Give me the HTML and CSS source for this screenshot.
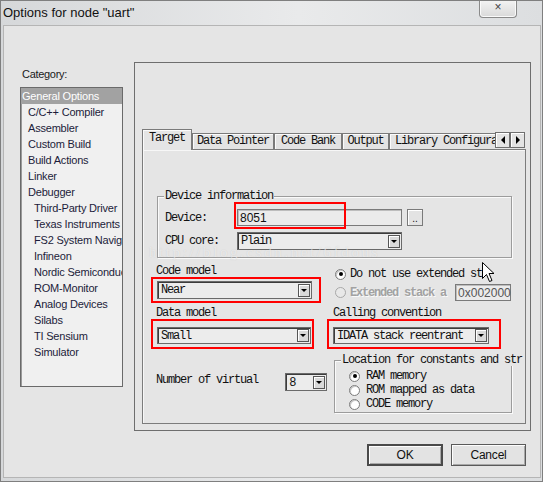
FILE: index.html
```html
<!DOCTYPE html>
<html>
<head>
<meta charset="utf-8">
<link rel="stylesheet" href="styles.css">
</head>
<body>
<div class="window">
  <div class="titlebar">
    <span class="title">Options for node "uart"</span>
    <div class="close">×</div>
  </div>
  <div class="client">
    <div class="main">
      <div class="left">
        <div class="cat-label">Category:</div>
        <div class="list">
          <div class="item sel">General Options</div>
          <div class="item l1">C/C++ Compiler</div>
          <div class="item l1">Assembler</div>
          <div class="item l1">Custom Build</div>
          <div class="item l1">Build Actions</div>
          <div class="item l1">Linker</div>
          <div class="item l1">Debugger</div>
          <div class="item l2">Third-Party Driver</div>
          <div class="item l2">Texas Instruments</div>
          <div class="item l2">FS2 System Navigator</div>
          <div class="item l2">Infineon</div>
          <div class="item l2">Nordic Semiconductor</div>
          <div class="item l2">ROM-Monitor</div>
          <div class="item l2">Analog Devices</div>
          <div class="item l2">Silabs</div>
          <div class="item l2">TI Sensium</div>
          <div class="item l2">Simulator</div>
        </div>
      </div>
      <div class="frame">
        <div class="tabstrip mono">
          <div class="tabs">
            <div class="tab active w-target">Target</div>
            <div class="tab w-dp">Data Pointer</div>
            <div class="tab w-cb">Code Bank</div>
            <div class="tab w-out">Output</div>
            <div class="tab w-lib">Library Configuration</div>
          </div>
          <div class="arrows">
            <div class="arrow"><i class="tri-left"></i></div>
            <div class="arrow"><i class="tri-right"></i></div>
          </div>
        </div>
        <div class="panel mono">
          <div class="group dev">
            <div class="legend">Device information</div>
            <div class="row r-dev">
              <span class="lbl-dev">Device:</span>
              <div class="input dev-in">8051</div>
              <div class="dots">..</div>
            </div>
            <div class="row r-cpu">
              <span class="lbl-dev">CPU core:</span>
              <div class="select cpu"><span class="val">Plain</span><i class="drop"></i></div>
            </div>
          </div>
          <div class="lower">
            <div class="cell a-left">
              <div class="lbl">Code model</div>
              <div class="redbox rb-code">
                <div class="select s-code"><span class="val">Near</span><i class="drop"></i></div>
              </div>
            </div>
            <div class="cell a-right">
              <div class="radio-row r1"><i class="radio on"></i><span>Do not use extended st</span></div>
              <div class="radio-row r2"><i class="radio off"></i><span class="disabled">Extended stack a</span><div class="input stack-in">0x002000</div></div>
            </div>
            <div class="cell b-left">
              <div class="lbl">Data model</div>
              <div class="redbox rb-data">
                <div class="select s-data"><span class="val">Small</span><i class="drop"></i></div>
              </div>
            </div>
            <div class="cell b-right">
              <div class="lbl lbl-call">Calling convention</div>
              <div class="redbox rb-call">
                <div class="select s-call"><span class="val">IDATA stack reentrant</span><i class="drop"></i></div>
              </div>
            </div>
            <div class="cell c-left">
              <span class="lbl-virt">Number of virtual</span>
              <div class="select s-virt"><span class="val sans">8</span><i class="drop"></i></div>
            </div>
            <div class="cell c-right">
              <div class="group loc">
                <div class="legend">Location for constants and str</div>
                <div class="loc-row first"><i class="radio on"></i><span>RAM memory</span></div>
                <div class="loc-row"><i class="radio"></i><span>ROM mapped as data</span></div>
                <div class="loc-row"><i class="radio"></i><span>CODE memory</span></div>
              </div>
            </div>
          </div>
          <div class="red-device"></div>
          <div class="watermark">http://blog.csdn.net/6fdous</div>
        </div>
      </div>
    </div>
    <div class="footer">
      <div class="button ok">OK</div>
      <div class="button">Cancel</div>
    </div>
  </div>
  <svg class="cursor" width="14" height="21" viewBox="0 0 14 21">
    <path d="M0.5 0.5 L0.5 16.5 L4.5 12.5 L7.5 19.5 L10 18.5 L7 11.5 L12 11.5 Z" fill="#fff" stroke="#000" stroke-width="1" stroke-linejoin="miter"/>
  </svg>
</div>
</body>
</html>
```

FILE: styles.css
```css
body {
  margin: 0;
  background: #ffffff;
}

.window {
  width: 543px;
  height: 482px;
  box-sizing: border-box;
  border: 1px solid #7f7f7f;
  background: linear-gradient(90deg, #d6d8da 0%, #e9eaeb 55%, #dcdee0 100%);
  display: flex;
  flex-direction: column;
  position: relative;
  font-family: "Liberation Sans", Arial, sans-serif;
  overflow: hidden;
}

.titlebar {
  height: 24px;
  display: flex;
  align-items: flex-start;
  padding-left: 2px;
}

.title {
  font-size: 13px;
  line-height: 24px;
  color: #111;
}

.close {
  margin-left: auto;
  margin-right: 25px;
  margin-top: -1px;
  width: 38px;
  height: 18px;
  box-sizing: border-box;
  border: 1px solid #8a8a8a;
  border-top: none;
  border-radius: 0 0 4px 4px;
  background: linear-gradient(#f4f4f4, #d9d9d9);
  box-shadow: inset 0 0 0 1px #fafafa;
  font-size: 12px;
  line-height: 15px;
  text-align: center;
  color: #444;
}

.client {
  flex: 1;
  margin: 0 1px 3px 2px;
  border: 1px solid #b5b5b5;
  background: #e5e5e5;
  display: flex;
  flex-direction: column;
}

.main {
  display: flex;
  align-items: flex-start;
  padding: 36px 0 0 16px;
}

.left {
  width: 103px;
  margin-right: 11px;
  padding-top: 5px;
}

.cat-label {
  font-size: 11px;
  letter-spacing: -0.3px;
  line-height: 14px;
  height: 14px;
  padding-left: 2px;
  color: #1a1a1a;
}

.list {
  margin-top: 6px;
  height: 300px;
  box-sizing: border-box;
  border: 1px solid #6a6a6a;
  box-shadow: inset 1px 1px 0 #9a9a9a;
  background: #f0f0f0;
  overflow: hidden;
}

.item {
  height: 16px;
  line-height: 16px;
  font-size: 11px;
  letter-spacing: -0.2px;
  white-space: nowrap;
  overflow: hidden;
  color: #1c1c3a;
}

.item.sel {
  background: #a2a2a2;
  color: #ffffff;
  padding-left: 1px;
}

.item.l1 { padding-left: 7px; }
.item.l2 { padding-left: 13px; }

.frame {
  width: 397px;
  height: 369px;
  box-sizing: border-box;
  border: 1px solid #6e6e6e;
  padding: 66px 4px 0 7px;
}

.mono {
  font-family: "Liberation Mono", "DejaVu Sans Mono", monospace;
  font-size: 12px;
  letter-spacing: -1.2px;
  color: #111;
}

.sans {
  font-family: "Liberation Sans", Arial, sans-serif;
  letter-spacing: 0;
}

.tabstrip {
  display: flex;
  align-items: flex-end;
  height: 21px;
  margin-bottom: -1px;
  position: relative;
  z-index: 1;
}

.tabs {
  display: flex;
  align-items: flex-end;
  width: 353px;
  height: 21px;
  overflow: hidden;
}

.tab {
  flex: none;
  height: 16px;
  margin-bottom: 1px;
  box-sizing: border-box;
  border: 1px solid #7a7a7a;
  border-bottom: none;
  box-shadow: inset 1px 1px 0 #fbfbfb;
  background: #e3e3e3;
  line-height: 15px;
  text-align: center;
  white-space: nowrap;
  overflow: hidden;
}

.tab.active {
  height: 21px;
  margin-bottom: 0;
  line-height: 17px;
  background: #e5e5e5;
  border-color: #7a7a7a;
}

.w-target { width: 50px; }
.w-dp { width: 82px; }
.w-cb { width: 68px; }
.w-out { width: 47px; }
.w-lib { width: 150px; text-align: left; padding-left: 5px; }

.arrows {
  display: flex;
  margin-bottom: 2px;
}

.arrow {
  width: 15px;
  height: 16px;
  box-sizing: border-box;
  border: 1px solid #6f6f6f;
  box-shadow: inset 1px 1px 0 #fff;
  background: #e3e3e3;
  display: flex;
  align-items: center;
  justify-content: center;
}

.tri-left {
  width: 0;
  height: 0;
  border-top: 4px solid transparent;
  border-bottom: 4px solid transparent;
  border-right: 4px solid #000;
}

.tri-right {
  width: 0;
  height: 0;
  border-top: 4px solid transparent;
  border-bottom: 4px solid transparent;
  border-left: 4px solid #000;
}

.panel {
  height: 275px;
  box-sizing: border-box;
  border: 1px solid #7c7c7c;
  box-shadow: inset 1px 1px 0 #f7f7f7;
  position: relative;
  background: #e5e5e5;
}

.group {
  box-sizing: border-box;
  border: 1px solid #9c9c9c;
  box-shadow: inset 1px 1px 0 #fafafa, 1px 1px 0 #fafafa;
}

.group.dev {
  margin: 46px 13px 0 14px;
  height: 62px;
}

.legend {
  display: block;
  width: max-content;
  height: 12px;
  line-height: 12px;
  margin: -7px 0 0 6px;
  padding: 0 1px;
  background: #e5e5e5;
  white-space: nowrap;
  position: relative;
}

.row {
  display: flex;
  align-items: center;
  padding-left: 7px;
}

.r-dev {
  margin-top: 7px;
  height: 17px;
}

.r-cpu {
  margin-top: 6px;
  height: 18px;
}

.lbl-dev {
  width: 72px;
  flex: none;
  line-height: 12px;
}

.input {
  box-sizing: border-box;
  border: 1px solid #7a7a7a;
  box-shadow: inset 1px 1px 0 #bdbdbd;
  background: #ebebeb;
  font-family: "Liberation Sans", Arial, sans-serif;
  letter-spacing: 0;
  font-size: 12px;
  color: #111;
  display: flex;
  align-items: center;
  white-space: nowrap;
}

.dev-in {
  width: 165px;
  height: 17px;
  padding-left: 2px;
}

.dots {
  width: 16px;
  height: 17px;
  margin-left: 5px;
  box-sizing: border-box;
  border: 1px solid #7a7a7a;
  box-shadow: inset 1px 1px 0 #fff;
  background: #e3e3e3;
  font-family: "Liberation Sans", Arial, sans-serif;
  letter-spacing: 0;
  font-size: 10px;
  line-height: 18px;
  text-align: center;
}

.select {
  box-sizing: border-box;
  border: 1px solid #6a6a6a;
  box-shadow: inset 1px 1px 0 #3c3c3c;
  background: #ececec;
  display: flex;
  align-items: center;
  padding: 0 1px 0 3px;
  white-space: nowrap;
}

.select .val {
  flex: 1;
  overflow: hidden;
  line-height: 12px;
}

.drop {
  flex: none;
  width: 12px;
  height: 13px;
  box-sizing: border-box;
  border: 1px solid #555;
  box-shadow: inset 1px 1px 0 #fff;
  background: #d9d9d9;
  display: flex;
  align-items: center;
  justify-content: center;
}

.drop::after {
  content: "";
  width: 0;
  height: 0;
  border-left: 3px solid transparent;
  border-right: 3px solid transparent;
  border-top: 3px solid #000;
}

.cpu {
  width: 165px;
  height: 18px;
}

.lower {
  display: grid;
  grid-template-columns: 176px 1fr;
  margin-left: 8px;
}

.lbl {
  line-height: 12px;
  height: 12px;
  padding-left: 5px;
  white-space: nowrap;
}

.a-left {
  padding-top: 7px;
}

.redbox {
  border: 2px solid #ff0000;
  box-sizing: border-box;
}

.rb-code {
  width: 170px;
  height: 26px;
  padding: 2px 0 0 4px;
}

.s-code {
  width: 155px;
  height: 18px;
}

.b-left, .b-right {
  padding-top: 4px;
}

.rb-data {
  width: 163px;
  height: 30px;
  padding: 6px 0 0 4px;
}

.s-data {
  width: 154px;
  height: 17px;
}

.lbl-call {
  padding-left: 6px;
}

.rb-call {
  width: 174px;
  height: 30px;
  padding: 6px 0 0 4px;
}

.s-call {
  width: 156px;
  height: 17px;
}

.radio-row {
  display: flex;
  align-items: center;
  padding-left: 8px;
  white-space: nowrap;
}

.radio-row.r1 {
  margin-top: 9px;
  height: 14px;
}

.radio-row.r2 {
  margin-top: 3px;
  height: 17px;
}

.radio {
  flex: none;
  width: 11px;
  height: 11px;
  box-sizing: border-box;
  border-radius: 50%;
  border: 1px solid #7c7c7c;
  background: #fff;
  box-shadow: inset 1px 1px 0 #c8c8c8;
  margin-right: 4px;
  display: flex;
  align-items: center;
  justify-content: center;
}

.radio.on::after {
  content: "";
  width: 4px;
  height: 4px;
  border-radius: 50%;
  background: #000;
}

.radio.off {
  border-color: #a8a8a8;
  background: #e8e8e8;
  box-shadow: none;
}

.disabled {
  color: #a2a2a2;
  font-weight: bold;
  text-shadow: 1px 1px 0 #fafafa;
}

.stack-in {
  width: 56px;
  height: 17px;
  margin-left: 9px;
  padding-left: 2px;
  color: #555;
}

.c-left {
  display: flex;
  align-items: flex-start;
  margin-top: 24px;
  height: 18px;
}

.lbl-virt {
  width: 131px;
  padding-left: 5px;
  margin-top: 1px;
  line-height: 12px;
  white-space: nowrap;
}

.s-virt {
  width: 42px;
  height: 18px;
}

.s-virt .val {
  font-size: 12px;
}

.group.loc {
  margin: 11px 0 0 7px;
  width: 178px;
  height: 53px;
}

.loc-row {
  display: flex;
  align-items: center;
  height: 14px;
  padding-left: 14px;
  white-space: nowrap;
}

.loc-row.first {
  margin-top: 3px;
}

.loc-row .radio {
  margin-right: 6px;
}

.red-device {
  position: absolute;
  left: 91px;
  top: 52px;
  width: 112px;
  height: 27px;
  box-sizing: border-box;
  border: 2px solid #ff0000;
}

.watermark {
  position: absolute;
  left: 6px;
  top: 94px;
  font-family: "Liberation Serif", serif;
  font-size: 15px;
  letter-spacing: 2.6px;
  color: rgba(255, 255, 255, 0.55);
  text-shadow: 0 0 1px rgba(120, 120, 120, 0.25);
  white-space: nowrap;
  pointer-events: none;
}

.footer {
  display: flex;
  justify-content: flex-end;
  gap: 8px;
  padding: 13px 14px 0 0;
}

.button {
  width: 75px;
  height: 22px;
  box-sizing: border-box;
  border: 1px solid #5a5a5a;
  box-shadow: inset 1px 1px 0 #fdfdfd, inset -1px -1px 0 #a8a8a8;
  background: #e3e3e3;
  font-size: 12px;
  letter-spacing: -0.2px;
  color: #111;
  display: flex;
  align-items: center;
  justify-content: center;
}

.button.ok {
  width: 76px;
  border: 2px solid #4a4a4a;
}

.cursor {
  position: absolute;
  left: 481px;
  top: 261px;
}
```
